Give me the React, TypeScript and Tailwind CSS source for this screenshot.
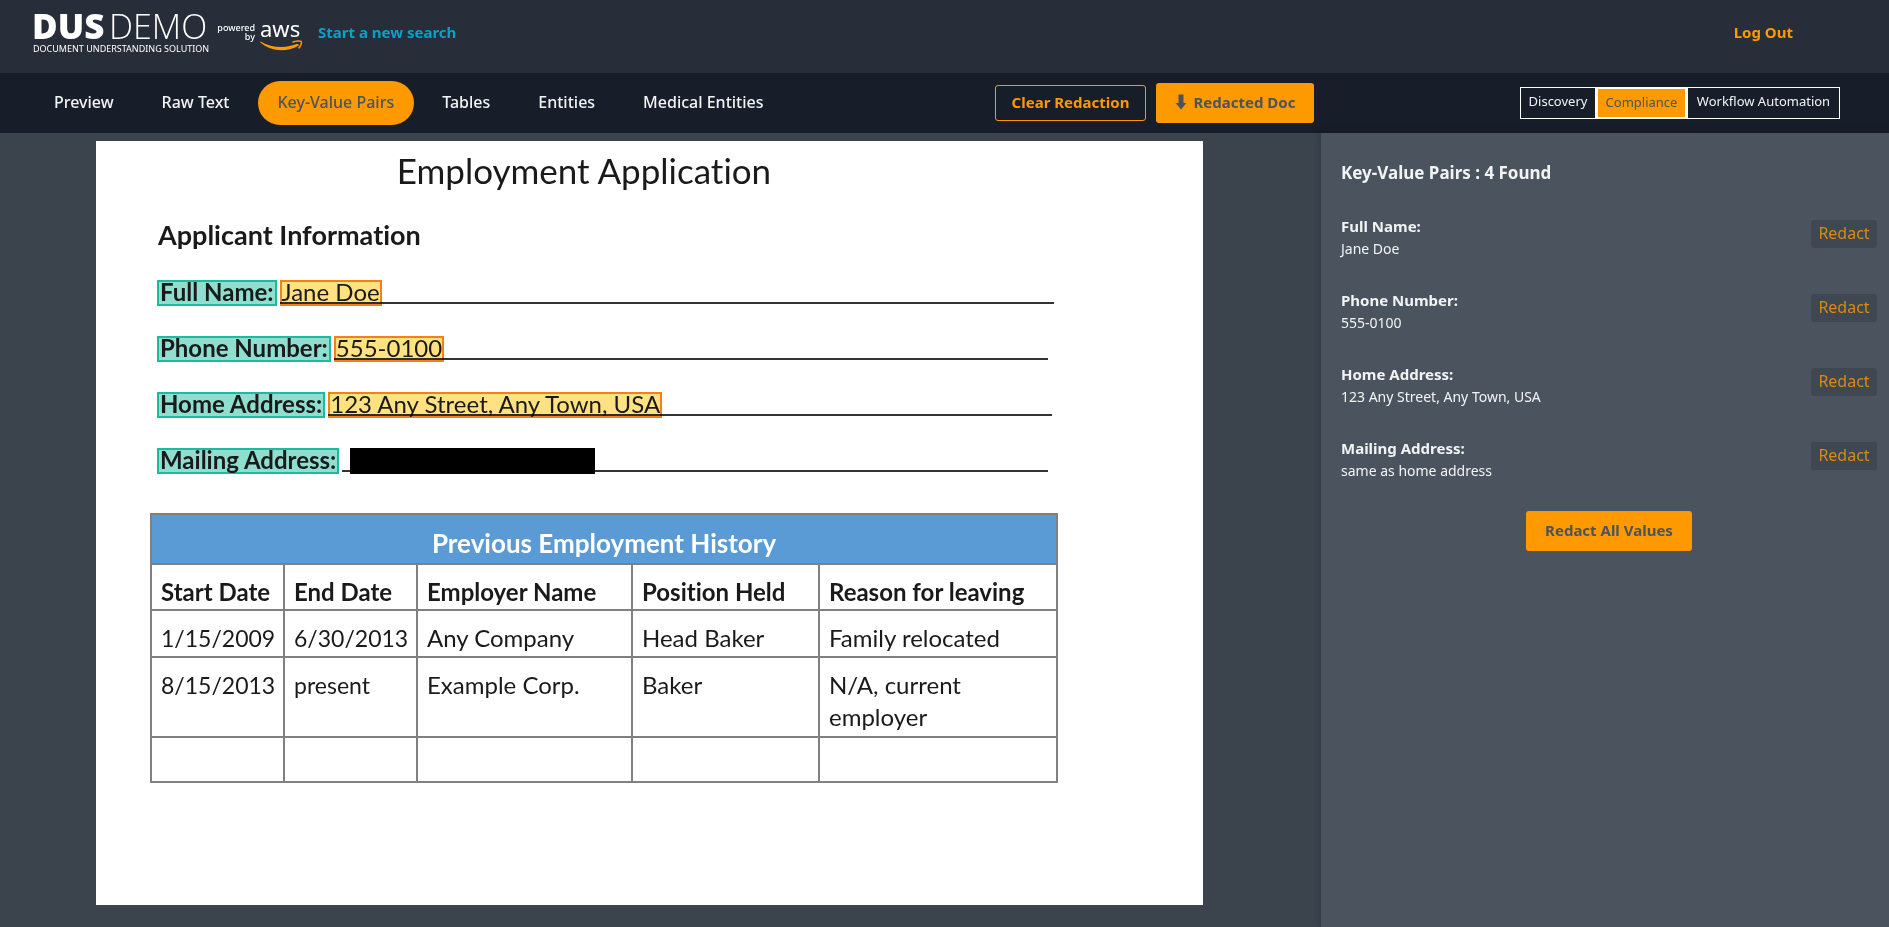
import React from 'react';

const tabs = ['Preview', 'Raw Text', 'Key-Value Pairs', 'Tables', 'Entities', 'Medical Entities'];

const pairs = [
  { label: 'Full Name:', value: 'Jane Doe', redacted: false, end: 'mr-1' },
  { label: 'Phone Number:', value: '555-0100', redacted: false, end: 'mr-[10px]' },
  { label: 'Home Address:', value: '123 Any Street, Any Town, USA', redacted: false, end: 'mr-1.5' },
  { label: 'Mailing Address:', value: 'same as home address', redacted: true, end: 'mr-[10px]' },
];

const history = [
  ['1/15/2009', '6/30/2013', 'Any Company', 'Head Baker', 'Family relocated'],
  ['8/15/2013', 'present', 'Example Corp.', 'Baker', 'N/A, current employer'],
  ['', '', '', '', ''],
];

const rowHeights = ['h-[47px]', 'h-20', 'h-[45px]'];

function Logo() {
  return (
    <svg viewBox="-4 -12 274 60" className="h-[60px] w-[274px] shrink-0" role="img" aria-label="DUS Demo, document understanding solution, powered by AWS">
      <g fill="#fff" fontFamily="'Noto Sans', sans-serif">
        <text x="-2" y="27" fontSize="35" fontWeight="800" fontFamily="'Open Sans', sans-serif">DUS</text>
        <text x="75" y="27" fontSize="34" fontWeight="300" fontFamily="'Open Sans', sans-serif">DEMO</text>
        <text x="-1" y="40" fontSize="9">DOCUMENT UNDERSTANDING SOLUTION</text>
        <text x="221" y="19" fontSize="9" fontWeight="500" textAnchor="end">powered</text>
        <text x="221" y="28" fontSize="9" fontWeight="500" textAnchor="end">by</text>
        <text x="226" y="25" fontSize="22">aws</text>
      </g>
      <path d="M226.500 29.400C238 36.200 252 36.400 263.600 31.800L265.200 33.200C253 40.600 237 39.800 226 30.300Z" fill="#ff9900" />
      <path d="M258.500 30.200C262 28.600 266.500 28.800 267.200 29.500C267.900 30.400 267 34 264.600 36.400" fill="none" stroke="#ff9900" strokeWidth="1.500" />
    </svg>
  );
}

function FieldLabel({ children }: { children: React.ReactNode }) {
  return (
    <span className="h-[26px] shrink-0 border-2 border-[#1abc9c] bg-[#8edfd0] px-px leading-5 font-bold whitespace-nowrap">{children}</span>
  );
}

function FieldValue({ children }: { children: React.ReactNode }) {
  return (
    <span className="h-[26px] shrink-0 border-2 border-[#f77f1a] bg-[#fee281] leading-5 whitespace-nowrap mix-blend-multiply">{children}</span>
  );
}

export default function App() {
  return (
    <div className="flex min-h-screen flex-col bg-[#3b444d] font-['Noto_Sans',sans-serif] text-[15px] text-[#f2f4f4]">
      <header className="flex h-[73px] items-start justify-between bg-[#282d3a] pr-24 pl-[30px]">
        <div className="flex items-start gap-[14px]">
          <Logo />
          <a href="#search" className="mt-3 leading-10 font-bold text-[#0aa0c8]">Start a new search</a>
        </div>
        <a href="#logout" className="mt-3 leading-10 font-bold text-[#ff9900]">Log Out</a>
      </header>

      <nav className="flex h-[60px] items-center bg-[#181d2a] pr-[49px] pl-[34px]">
        <div className="flex gap-2">
          {tabs.map((tab) => (
            <button
              key={tab}
              type="button"
              className={
                tab === 'Key-Value Pairs'
                  ? 'h-11 rounded-full bg-[#ff9900] px-5 pb-[2px] text-[16px] font-medium text-[#4a535e]'
                  : 'h-11 rounded-full px-5 pb-[2px] text-[16px] font-medium'
              }
            >
              {tab}
            </button>
          ))}
        </div>
        <div className="ml-auto flex items-center gap-[10px]">
          <button type="button" className="h-9 w-[151px] rounded-[3px] border border-[#ff9900] pb-[2px] font-bold text-[#ff9900]">Clear Redaction</button>
          <button type="button" className="flex h-10 w-[158px] items-center justify-center gap-[7px] rounded-[3px] bg-[#ff9900] pb-[2px] font-bold text-[#4a535e]">
            <svg viewBox="0 0 12 16" className="h-4 w-3" aria-hidden="true">
              <path d="M3.500 0.500h5v8.500h3L6 15.500L0.500 9h3z" fill="#4a535e" />
            </svg>
            Redacted Doc
          </button>
        </div>
        <div className="ml-[206px] flex h-8 shrink-0 text-[13px]">
          <button type="button" className="w-[76px] border border-white pb-[2px]">Discovery</button>
          <button type="button" className="w-[91px] border-2 border-white bg-[#ff9900] text-[#4a535e]">Compliance</button>
          <button type="button" className="w-[153px] border border-white pb-[2px]">Workflow Automation</button>
        </div>
      </nav>

      <div className="flex flex-1">
        <main className="flex-1 pt-2 pr-[118px] pb-[22px] pl-24">
          <article className="h-full bg-white pt-[5px] pr-[145px] pl-[54px] font-['Lato',sans-serif] text-[24px] text-[#1a1a1a] [font-variant-ligatures:none]">
            <h1 className="pr-[40px] text-center text-[35px] leading-[48px]">Employment Application</h1>
            <h2 className="mt-[25px] ml-2 text-[27px] leading-8 font-bold">Applicant Information</h2>

            <div className="mt-[29px] ml-[7px] flex flex-col gap-[30px]">
              {pairs.map((pair) => (
                <div key={pair.label} className="flex h-[26px] gap-[3px]">
                  <FieldLabel>{pair.label}</FieldLabel>
                  <div className={`flex h-6 flex-1 border-b-2 border-[#333] ${pair.end}`}>
                    {pair.redacted ? <span className="ml-2 h-[26px] w-[245px] bg-black" /> : <FieldValue>{pair.value}</FieldValue>}
                  </div>
                </div>
              ))}
            </div>

            <table className="mt-[39px] w-full table-fixed border-collapse border-2 border-[#808080] text-left">
              <colgroup>
                <col className="w-[133px]" />
                <col className="w-[133px]" />
                <col className="w-[215px]" />
                <col className="w-[187px]" />
                <col />
              </colgroup>
              <thead>
                <tr className="h-[50px]">
                  <th colSpan={5} className="border-2 border-[#808080] bg-[#5b9bd5] pt-2 text-center text-[26px] leading-8 text-white">Previous Employment History</th>
                </tr>
                <tr className="h-[46px]">
                  {['Start Date', 'End Date', 'Employer Name', 'Position Held', 'Reason for leaving'].map((h) => (
                    <th key={h} className="border-2 border-[#808080] pt-[10px] pl-[9px] leading-8 whitespace-nowrap">{h}</th>
                  ))}
                </tr>
              </thead>
              <tbody>
                {history.map((row, r) => (
                  <tr key={r} className={rowHeights[r]}>
                    {row.map((cell, c) => (
                      <td
                        key={c}
                        className={
                          c < 2
                            ? 'border-2 border-[#808080] pt-[11px] pl-[9px] align-top text-[23px] leading-8'
                            : 'border-2 border-[#808080] pt-[11px] pl-[9px] align-top leading-8'
                        }
                      >
                        {cell}
                      </td>
                    ))}
                  </tr>
                ))}
              </tbody>
            </table>
          </article>
        </main>

        <aside className="w-[568px] shrink-0 bg-[#4a535e] pt-[26px] pr-3 pl-5 shadow-[0_0_6px_rgba(0,0,0,0.3)]">
          <h2 className="text-[17px] leading-7 font-bold">Key-Value Pairs : 4 Found</h2>
          <ul className="mt-[23px]">
            {pairs.map((pair) => (
              <li key={pair.label} className="flex h-[74px] items-start justify-between pt-1">
                <div>
                  <h3 className="leading-6 font-bold">{pair.label}</h3>
                  <p className="text-[14px] leading-[22px]">{pair.value}</p>
                </div>
                <button type="button" className="mt-1.5 h-7 w-[66px] rounded-[3px] bg-[#3f4850] pb-[2px] text-[16px] leading-6 text-[#d88a16]">Redact</button>
              </li>
            ))}
          </ul>
          <div className="flex justify-center">
            <button type="button" className="mt-[5px] h-10 w-[166px] rounded-[3px] bg-[#ff9900] pb-[2px] font-bold text-[#4a535e]">Redact All Values</button>
          </div>
        </aside>
      </div>
    </div>
  );
}
